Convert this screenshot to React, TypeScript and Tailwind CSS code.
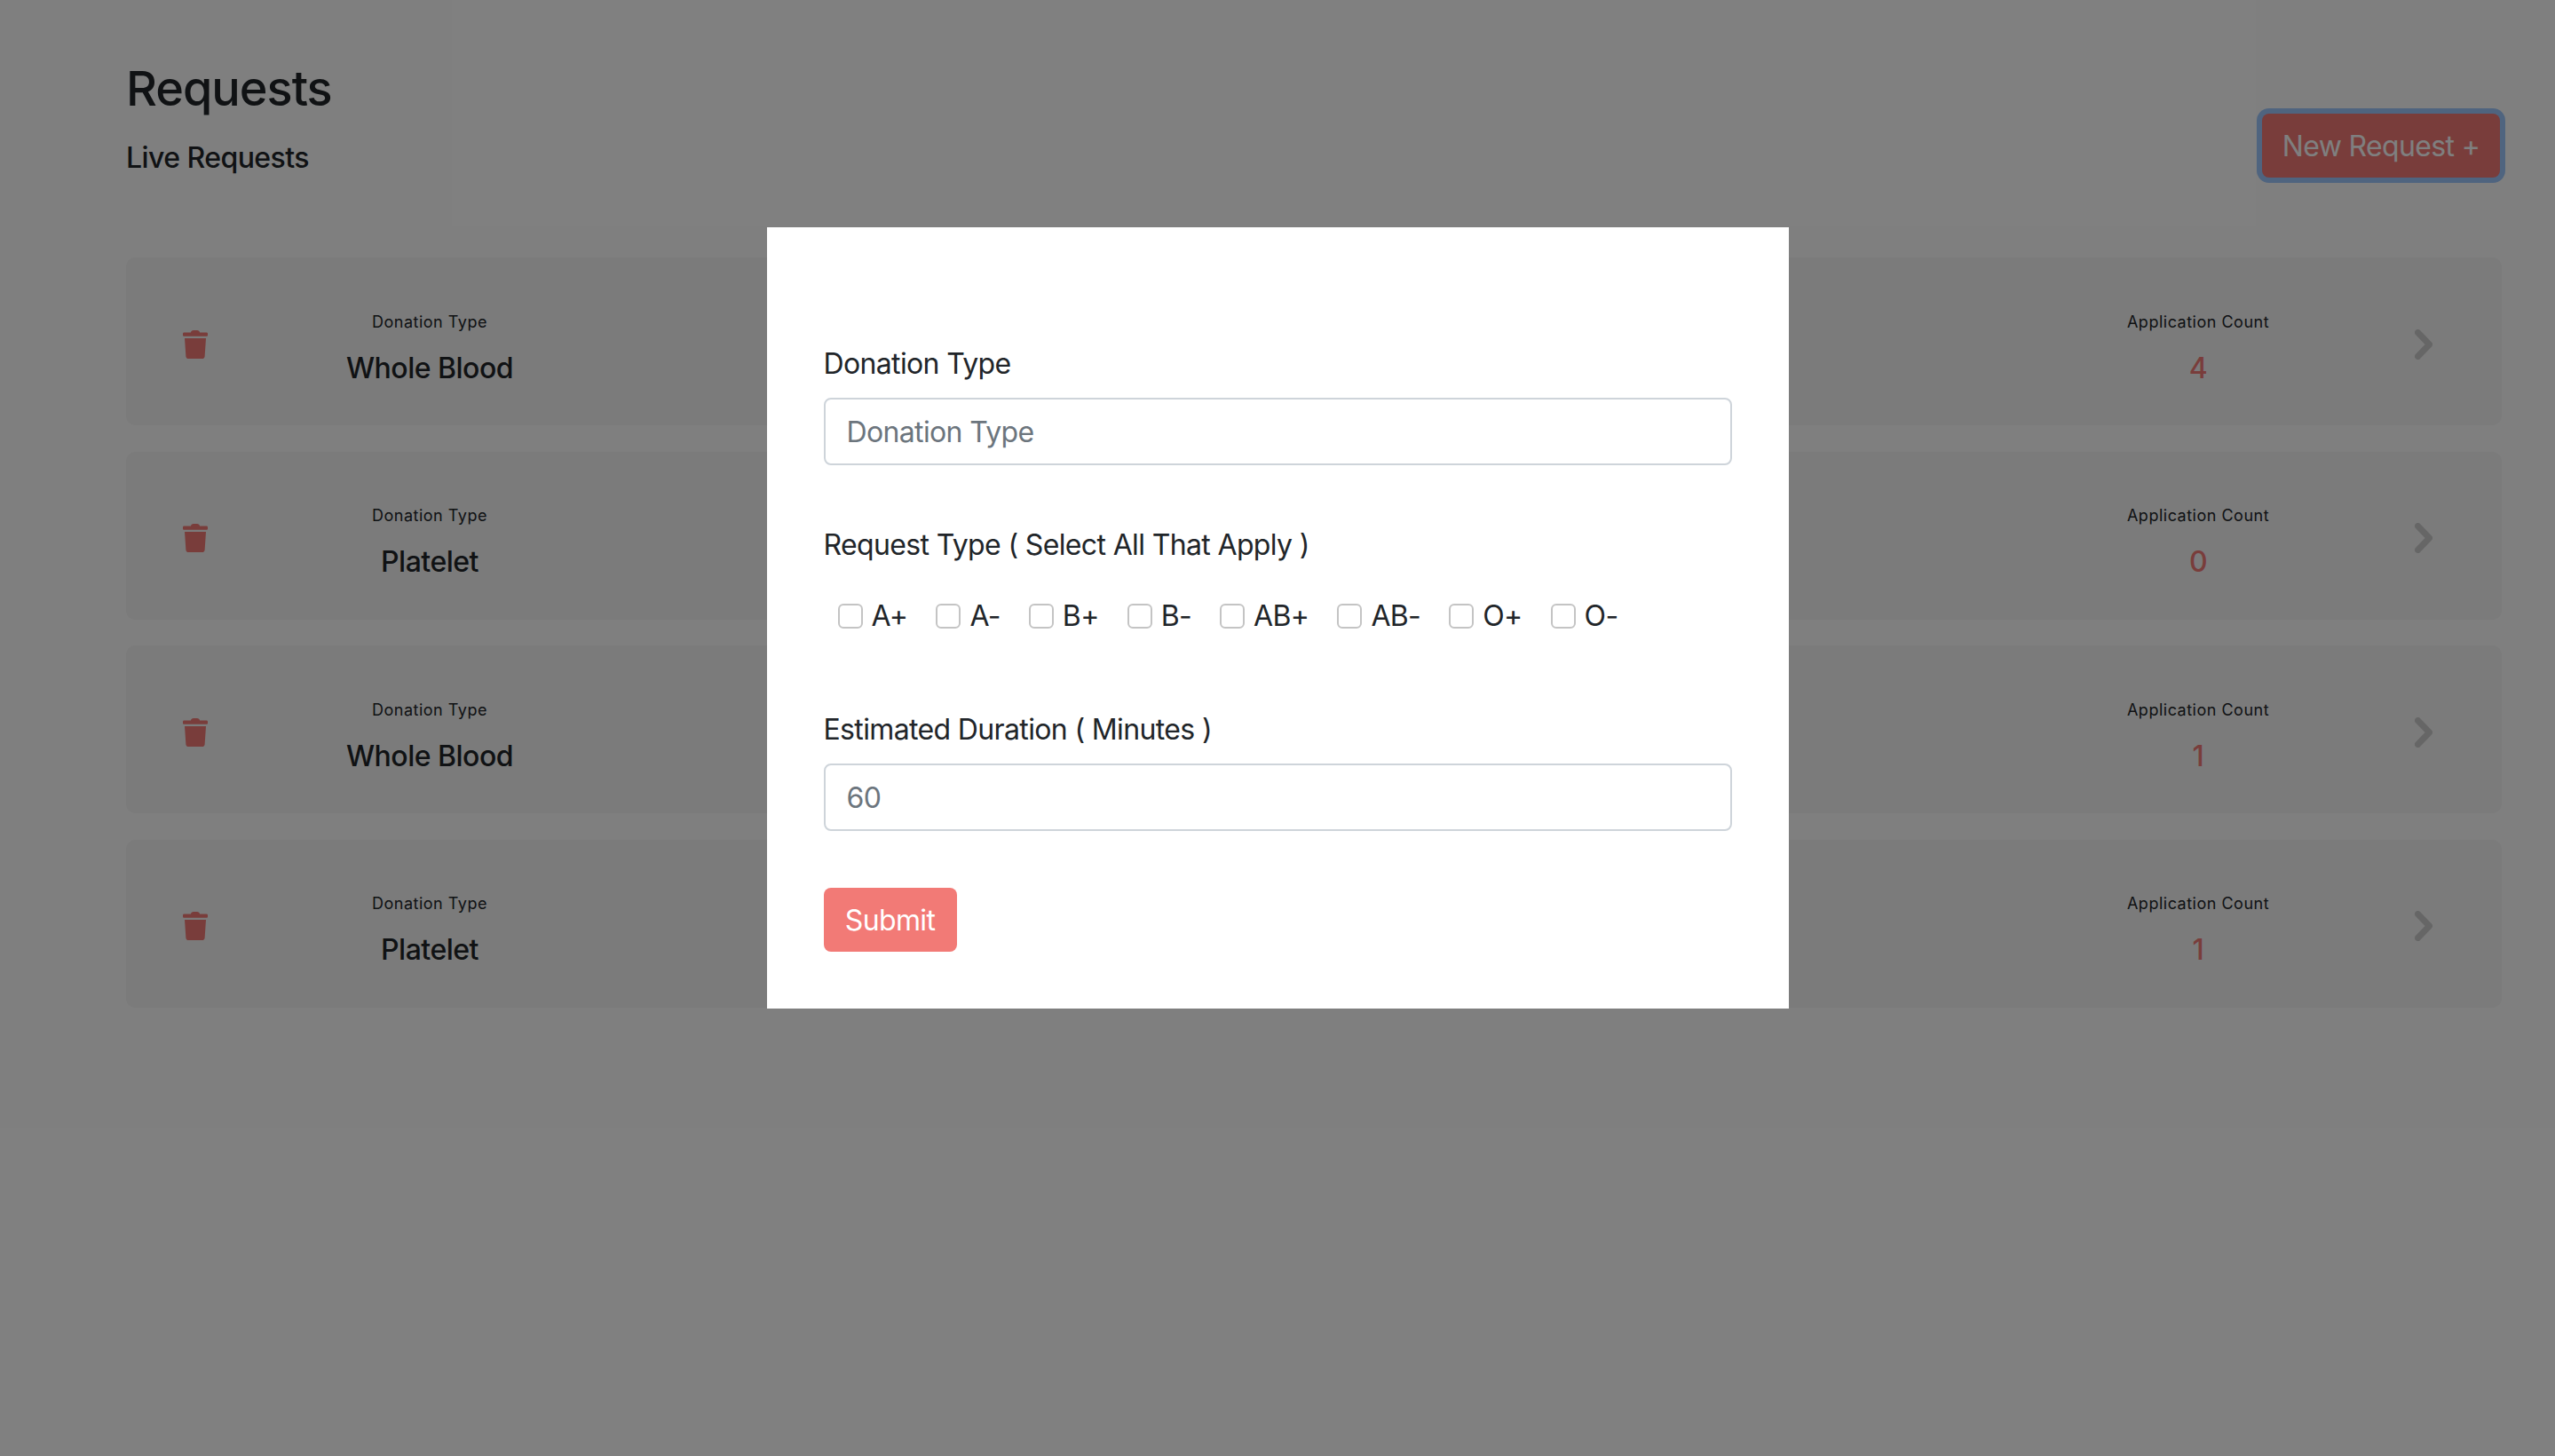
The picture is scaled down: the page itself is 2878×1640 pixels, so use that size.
const requests = [
  { type: "Whole Blood", count: 4 },
  { type: "Platelet", count: 0 },
  { type: "Whole Blood", count: 1 },
  { type: "Platelet", count: 1 },
];

const bloodTypes = ["A+", "A-", "B+", "B-", "AB+", "AB-", "O+", "O-"];

function TrashIcon() {
  return (
    <svg viewBox="0 0 28 32" className="mt-[6px] h-8 w-7 fill-[#f27a76]">
      <path d="M9 2.6C9 1.2 10.5 0 12 0h4c1.5 0 3 1.2 3 2.6h7.6c.8 0 1.4.6 1.4 1.4v1.4c0 .8-.6 1.4-1.4 1.4H1.4C.6 6.8 0 6.2 0 5.4V4c0-.8.6-1.4 1.4-1.4H9z" />
      <path d="M2 9h24l-1.4 20.4c-.1 1.5-1.2 2.6-2.7 2.6H6.1c-1.5 0-2.6-1.1-2.7-2.6L2 9z" />
    </svg>
  );
}

function ChevronIcon() {
  return (
    <svg viewBox="0 0 20 34" className="mt-[6px] h-[34px] w-5 fill-none stroke-[#cccccc]">
      <path d="M3.5 3.5 16.5 17 3.5 30.5" strokeWidth="7" strokeLinecap="round" strokeLinejoin="round" />
    </svg>
  );
}

function RequestRow({ type, count }: { type: string; count: number }) {
  return (
    <div className="flex h-[189px] items-center rounded-[10px] bg-[#f6f6f6] pl-16">
      <TrashIcon />
      <div className="ml-[140px] flex w-[220px] flex-col items-center pt-[18px]">
        <span className="text-[18px] leading-[28px] tracking-[0.5px]">Donation Type</span>
        <span className="mt-[14px] text-[32px] leading-[48px] font-medium tracking-[-0.5px]">{type}</span>
      </div>
      <div className="flex-1" />
      <div className="flex w-[220px] flex-col items-center pt-[18px]">
        <span className="text-[18px] leading-[28px] tracking-[0.5px]">Application Count</span>
        <span className="mt-[14px] text-[32px] leading-[48px] font-medium tracking-[-0.5px] text-[#f27a76]">{count}</span>
      </div>
      <div className="ml-[134px] mr-[78px]">
        <ChevronIcon />
      </div>
    </div>
  );
}

export default function App() {
  return (
    <div className="relative h-[1640px] w-full overflow-hidden bg-white font-['Inter',sans-serif] text-[#212529]">
      {/* Page behind the modal */}
      <div className="pl-[142px] pr-[60px] pt-[58px]">
        <div className="flex items-start justify-between">
          <div>
            <h1 className="text-[54px] leading-[84px] font-medium tracking-[-1px]">Requests</h1>
            <p className="mt-[12px] text-[32px] leading-[48px] font-medium tracking-[-0.56px]">Live Requests</p>
          </div>
          <button className="mt-[70px] mr-[2px] h-[72px] w-[268px] rounded-[8px] bg-[#f27a76] pt-[2px] text-[32px] tracking-[-0.64px] text-white ring-[6px] ring-[#9ec8ff]">
            New Request +
          </button>
        </div>
        <div className="mt-[88px] flex flex-col gap-[29.5px]">
          {requests.map((r, i) => (
            <RequestRow key={i} type={r.type} count={r.count} />
          ))}
        </div>
      </div>

      {/* Modal overlay */}
      <div className="absolute inset-0 flex justify-center bg-black/50 pt-[256px]">
        <div className="h-[880px] w-[1151px] bg-white px-16 pt-[128px] text-[32px] leading-[48px] tracking-[-0.64px]">
          <label className="block leading-[52px]">Donation Type</label>
          <input
            placeholder="Donation Type"
            className="mt-3 block h-[76px] w-full rounded-lg border-2 border-[#ced4da] px-[24px] placeholder:text-[#6c757d]"
          />

          <label className="mt-16 block leading-[52px]">Request Type ( Select All That Apply )</label>
          <div className="mt-[30px] flex items-center gap-[32px] pl-4">
            {bloodTypes.map((b) => (
              <label key={b} className="flex items-center gap-[10px]">
                <span className="h-7 w-7 rounded-[6px] border-2 border-[#c4c4c4] bg-white" />
                {b}
              </label>
            ))}
          </div>

          <label className="mt-[78px] block leading-[52px]">Estimated Duration ( Minutes )</label>
          <input
            placeholder="60"
            className="mt-3 block h-[76px] w-full rounded-lg border-2 border-[#ced4da] px-[24px] placeholder:text-[#6c757d]"
          />

          <button className="mt-16 h-[72px] w-[150px] rounded-lg bg-[#f27a76] pt-[2px] text-white">Submit</button>
        </div>
      </div>
    </div>
  );
}
